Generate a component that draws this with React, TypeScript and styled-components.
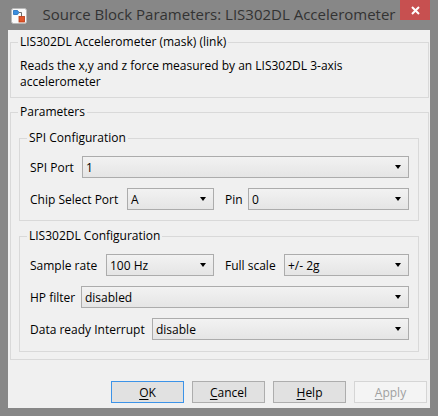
import React from "react";
import styled, { createGlobalStyle } from "styled-components";

const Global = createGlobalStyle`
  html, body { margin: 0; padding: 0; background: #878787; }
  body { font-family: "Open Sans", "Noto Sans", sans-serif; font-size: 12px; color: #000; }
  * { box-sizing: border-box; }
`;

const Window = styled.div`
  width: 438px;
  height: 416px;
  background: #878787;
  display: flex;
  flex-direction: column;
  padding: 0 8px 8px 8px;
`;

const TitleBar = styled.div`
  height: 30px;
  display: grid;
  grid-template-columns: 30px 1fr 30px;
  align-items: start;
`;

const AppIcon = styled.div`
  margin: 8px 0 0 3px;
  width: 16px;
  height: 16px;
`;

const Title = styled.div`
  padding-top: 4px;
  text-align: center;
  font-size: 15px;
  line-height: 20px;
  color: #333;
  white-space: nowrap;
`;

const CloseButton = styled.div`
  width: 30px;
  height: 20px;
  background: #c75050;
  display: flex;
  align-items: center;
  justify-content: center;
`;

const Content = styled.div`
  flex: 1;
  background: #f0f0f0;
  display: flex;
  flex-direction: column;
  padding: 4px 1px 0 2px;
`;

const Group = styled.fieldset<{ $mt?: number }>`
  margin: ${(p) => p.$mt ?? 0}px 0 0 0;
  padding: 0;
  border: 1px solid #d9d9d9;
  min-width: 0;
`;

const Legend = styled.legend`
  margin-left: 7px;
  padding: 0 2px;
  line-height: 16px;
  font-size: 12px;
`;

const GroupBody = styled.div<{ $pad: string }>`
  padding: ${(p) => p.$pad};
  display: flex;
  flex-direction: column;
`;

const Description = styled.div`
  line-height: 16px;
`;

const Row = styled.div<{ $mt?: number }>`
  display: flex;
  gap: 11px;
  margin-top: ${(p) => p.$mt ?? 0}px;
`;

const Field = styled.div`
  flex: 1;
  display: flex;
  align-items: center;
  min-width: 0;
`;

const Label = styled.span<{ $w: number }>`
  width: ${(p) => p.$w}px;
  flex: none;
  white-space: nowrap;
`;

const Select = styled.div`
  flex: 1;
  height: 22px;
  border: 1px solid #acacac;
  background: linear-gradient(#f2f2f2, #e5e5e5);
  display: flex;
  align-items: center;
  padding: 0 7px 0 3px;
  min-width: 0;
`;

const SelectValue = styled.span`
  flex: 1;
  white-space: nowrap;
`;

const Arrow = styled.span`
  width: 0;
  height: 0;
  border-left: 3.5px solid transparent;
  border-right: 3.5px solid transparent;
  border-top: 4px solid #000;
`;

const ButtonBar = styled.div`
  display: flex;
  justify-content: flex-end;
  gap: 8px;
  margin-top: 21px;
  padding-right: 2px;
`;

const Button = styled.div<{ $variant?: "default" | "disabled" }>`
  width: 73px;
  height: 22px;
  display: flex;
  align-items: center;
  justify-content: center;
  border: 1px solid
    ${(p) => (p.$variant === "default" ? "#3c93e8" : p.$variant === "disabled" ? "#d5d5d5" : "#adadad")};
  background: ${(p) => (p.$variant === "disabled" ? "#f4f4f4" : "#e1e1e1")};
  color: ${(p) => (p.$variant === "disabled" ? "#a0a0a0" : "#000")};
  u { text-decoration: underline; text-underline-offset: 2px; }
`;

function Dropdown({ value }: { value: string }) {
  return (
    <Select>
      <SelectValue>{value}</SelectValue>
      <Arrow />
    </Select>
  );
}

export default function App() {
  return (
    <>
      <Global />
      <Window>
        <TitleBar>
          <AppIcon>
            <svg width="16" height="16" viewBox="0 0 16 16">
              <rect x="0.5" y="0.5" width="15" height="15" rx="2" fill="#fafafa" stroke="#b8b8b8" />
              <path d="M2.5 2.5 H6.5 L8 4.5 L6.5 6.5 H2.5 Z" fill="#3a8ee0" stroke="#1f6bb8" strokeWidth="0.8" />
              <path d="M8 4.5 H10.5 V8.5" fill="none" stroke="#6b6b6b" strokeWidth="1" />
              <rect x="8" y="8.5" width="5.5" height="5.5" fill="#e2552a" stroke="#b53a14" strokeWidth="0.8" />
            </svg>
          </AppIcon>
          <Title>Source Block Parameters: LIS302DL Accelerometer</Title>
          <CloseButton>
            <svg width="9" height="9" viewBox="0 0 9 9">
              <path d="M1 1 L8 8 M8 1 L1 8" stroke="#fff" strokeWidth="2" />
            </svg>
          </CloseButton>
        </TitleBar>
        <Content>
          <Group>
            <Legend>LIS302DL Accelerometer (mask) (link)</Legend>
            <GroupBody $pad="8px 9px 7px 9px">
              <Description>
                Reads the x,y and z force measured by an LIS302DL 3-axis
                <br />
                accelerometer
              </Description>
            </GroupBody>
          </Group>
          <Group $mt={6}>
            <Legend>Parameters</Legend>
            <GroupBody $pad="10px 9px 7px 8px">
              <Group>
                <Legend>SPI Configuration</Legend>
                <GroupBody $pad="10px 9px 10px 10px">
                  <Row>
                    <Field>
                      <Label $w={52}>SPI Port</Label>
                      <Dropdown value="1" />
                    </Field>
                  </Row>
                  <Row $mt={10}>
                    <Field>
                      <Label $w={97}>Chip Select Port</Label>
                      <Dropdown value="A" />
                    </Field>
                    <Field>
                      <Label $w={23}>Pin</Label>
                      <Dropdown value="0" />
                    </Field>
                  </Row>
                </GroupBody>
              </Group>
              <Group $mt={7}>
                <Legend>LIS302DL Configuration</Legend>
                <GroupBody $pad="10px 9px 11px 10px">
                  <Row>
                    <Field>
                      <Label $w={76}>Sample rate</Label>
                      <Dropdown value="100 Hz" />
                    </Field>
                    <Field>
                      <Label $w={59}>Full scale</Label>
                      <Dropdown value="+/- 2g" />
                    </Field>
                  </Row>
                  <Row $mt={10}>
                    <Field>
                      <Label $w={51}>HP filter</Label>
                      <Dropdown value="disabled" />
                    </Field>
                  </Row>
                  <Row $mt={10}>
                    <Field>
                      <Label $w={122}>Data ready Interrupt</Label>
                      <Dropdown value="disable" />
                    </Field>
                  </Row>
                </GroupBody>
              </Group>
            </GroupBody>
          </Group>
          <ButtonBar>
            <Button $variant="default">
              <span><u>O</u>K</span>
            </Button>
            <Button>
              <span><u>C</u>ancel</span>
            </Button>
            <Button>
              <span><u>H</u>elp</span>
            </Button>
            <Button $variant="disabled">
              <span><u>A</u>pply</span>
            </Button>
          </ButtonBar>
        </Content>
      </Window>
    </>
  );
}
